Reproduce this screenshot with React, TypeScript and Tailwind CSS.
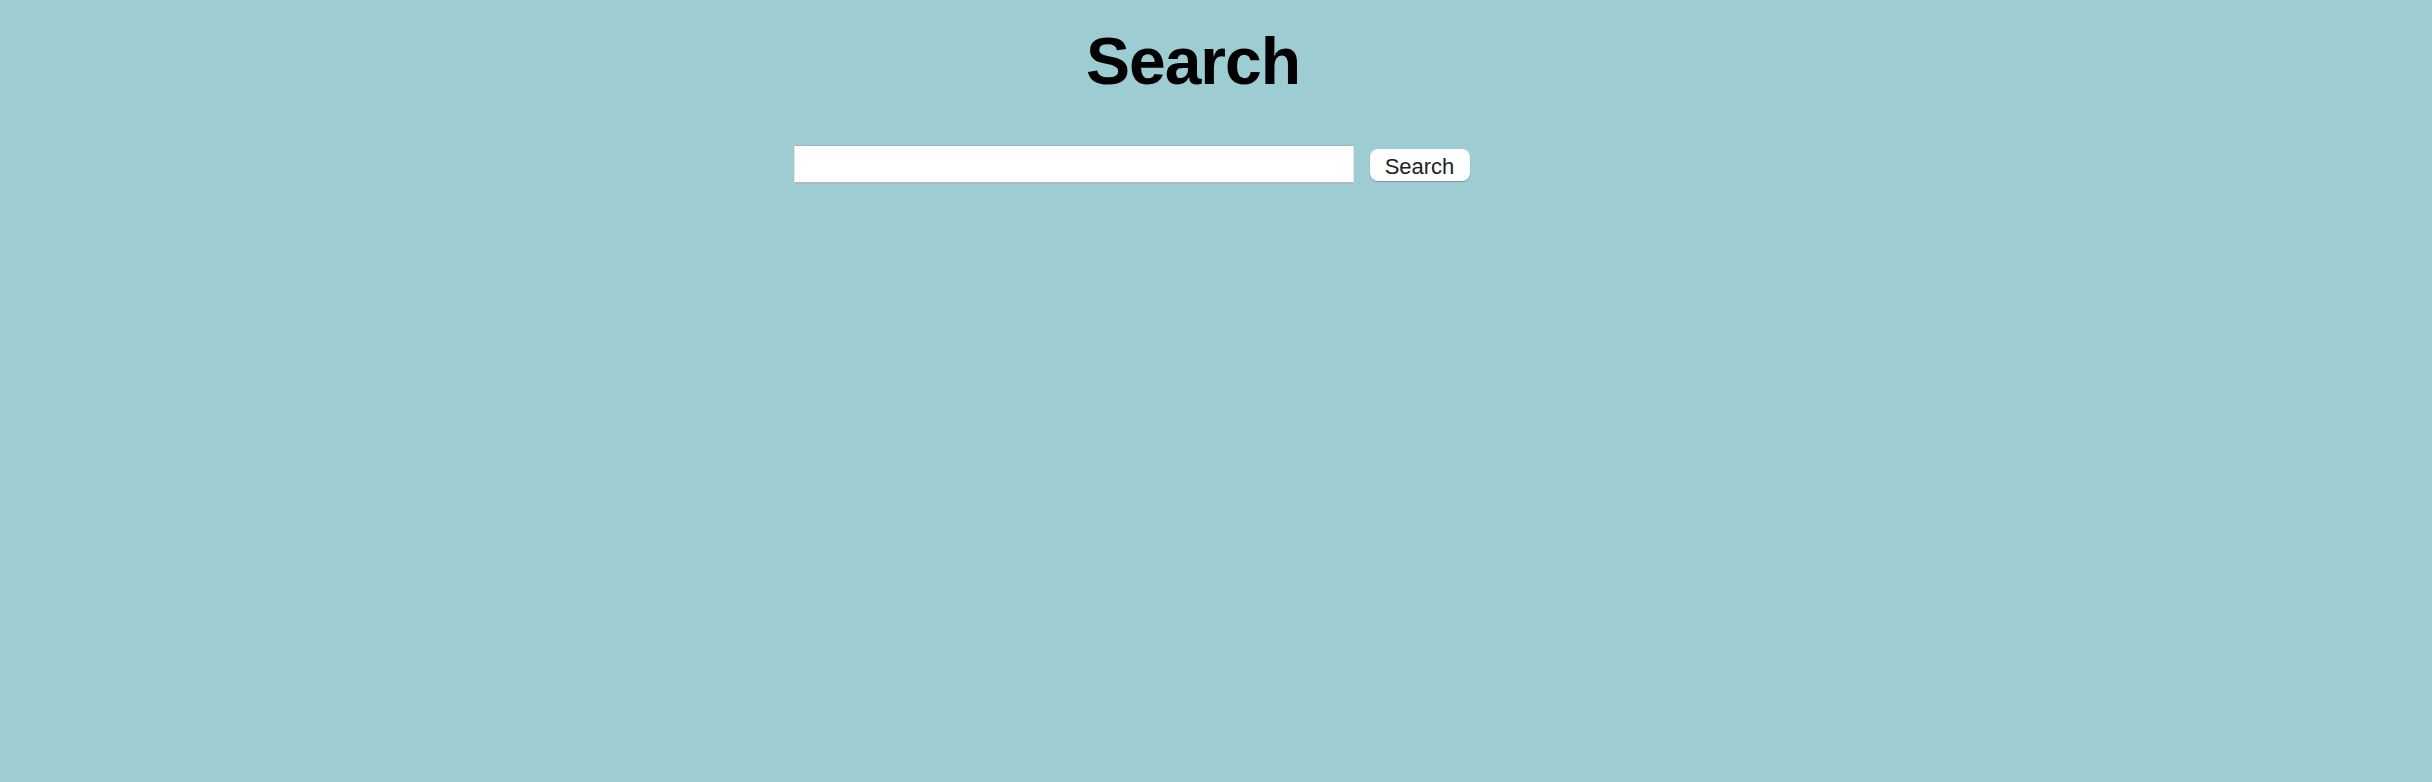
export default function App() {
  return (
    <div className="min-h-screen w-full bg-[#9dccd3] font-['Liberation_Sans',Arial,sans-serif]">
      <div className="flex flex-col pt-[28px]">
        <h1 className="pr-[46px] text-center text-[66px] leading-none font-bold tracking-[-1px] text-black">
          Search
        </h1>

        <form
          className="mt-[51px] flex items-center justify-center gap-4 pr-[169px]"
          onSubmit={(e) => e.preventDefault()}
        >
          <input
            type="text"
            className="h-[39px] w-[560px] border-t border-r border-b-2 border-l border-t-[#8fb8bf] border-r-[#e4e4e4] border-b-[#b1b6b8] border-l-[#e4e4e4] bg-white px-2 text-[18px] outline-none"
          />
          <button
            type="submit"
            className="flex h-[32px] w-[100px] items-center justify-center rounded-lg bg-white pt-[3px] text-[22px] text-[#222] shadow-[0_1px_1px_rgba(0,0,0,0.25)]"
          >
            Search
          </button>
        </form>
      </div>
    </div>
  );
}
